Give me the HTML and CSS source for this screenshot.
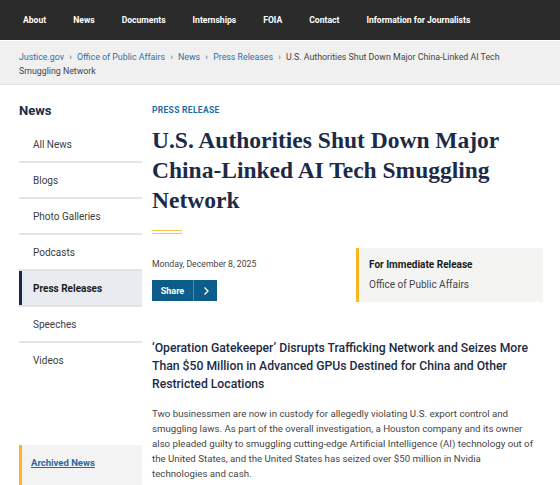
FILE: index.html
```html
<!DOCTYPE html>
<html lang="en">

<head>
    <meta charset="UTF-8">
    <meta name="viewport" content="width=device-width, initial-scale=1.0">
    <title>U.S. Authorities Shut Down Major China-Linked AI Tech Smuggling Network</title>
    <link rel="stylesheet" href="styles.css">
</head>

<body>
    <nav class="top-nav">
        <a href="#">About</a>
        <a href="#">News</a>
        <a href="#">Documents</a>
        <a href="#">Internships</a>
        <a href="#">FOIA</a>
        <a href="#">Contact</a>
        <a href="#">Information for Journalists</a>
    </nav>

    <div class="breadcrumb">
        <a href="#">Justice.gov</a> <span class="sep">&rsaquo;</span>
        <a href="#">Office of Public Affairs</a> <span class="sep">&rsaquo;</span>
        <a href="#">News</a> <span class="sep">&rsaquo;</span>
        <a href="#">Press Releases</a> <span class="sep">&rsaquo;</span>
        <span class="current">U.S. Authorities Shut Down Major China-Linked AI Tech Smuggling Network</span>
    </div>

    <div class="page">
        <aside class="sidebar">
            <h2 class="side-title">News</h2>
            <ul class="side-menu">
                <li><a href="#">All News</a></li>
                <li><a href="#">Blogs</a></li>
                <li><a href="#">Photo Galleries</a></li>
                <li><a href="#">Podcasts</a></li>
                <li class="active"><a href="#">Press Releases</a></li>
                <li><a href="#">Speeches</a></li>
                <li><a href="#">Videos</a></li>
            </ul>
            <div class="archived">
                <a href="#">Archived News</a>
            </div>
        </aside>

        <main class="article">
            <div class="kicker">Press Release</div>
            <h1 class="title">U.S. Authorities Shut Down Major China-Linked AI Tech Smuggling Network</h1>
            <div class="rule"></div>

            <div class="meta-row">
                <div class="meta-left">
                    <div class="date">Monday, December 8, 2025</div>
                    <div class="share">
                        <span class="share-label">Share</span>
                        <span class="share-arrow">
                            <svg width="8" height="10" viewBox="0 0 8 10">
                                <path d="M2.5 1.5 L6 5 L2.5 8.5" fill="none" stroke="#fff" stroke-width="1.3" />
                            </svg>
                        </span>
                    </div>
                </div>
                <div class="release-box">
                    <div class="release-title">For Immediate Release</div>
                    <div class="release-office">Office of Public Affairs</div>
                </div>
            </div>

            <h2 class="subtitle">‘Operation Gatekeeper’ Disrupts Trafficking Network and Seizes More Than $50 Million in Advanced GPUs Destined for China and Other Restricted Locations</h2>

            <p class="body-text">Two businessmen are now in custody for allegedly violating U.S. export control and smuggling laws. As part of the overall investigation, a Houston company and its owner also pleaded guilty to smuggling cutting-edge Artificial Intelligence (AI) technology out of the United States, and the United States has seized over $50 million in Nvidia technologies and cash.</p>
        </main>
    </div>
</body>

</html>
```

FILE: styles.css
```css
* {
    margin: 0;
    padding: 0;
    box-sizing: border-box;
}

body {
    font-family: "Roboto", "Liberation Sans", Arial, sans-serif;
    color: #1b1b1b;
    background: white;
    width: 560px;
    overflow: hidden;
}

a {
    text-decoration: none;
}

/* top navigation */
.top-nav {
    height: 41px;
    background-color: #2b2b2b;
    border-bottom: 1px solid #ffffff;
    display: flex;
    align-items: center;
    gap: 27px;
    padding-left: 23px;
}

.top-nav a {
    color: #ffffff;
    font-size: 8.6px;
    font-weight: 700;
    white-space: nowrap;
}

/* breadcrumb */
.breadcrumb {
    background-color: #f0f0f0;
    border-bottom: 1px solid #e4e4e4;
    padding: 9px 19px 6px;
    font-size: 8.8px;
    line-height: 14px;
    color: #454545;
}

.breadcrumb a {
    color: #2672a8;
}

.breadcrumb .sep {
    color: #6b6b6b;
    margin: 0 3px;
}

/* page layout */
.page {
    display: flex;
    gap: 10px;
    padding: 0 17px 0 19px;
}

.sidebar {
    width: 123px;
    flex-shrink: 0;
    padding-top: 18px;
}

.side-title {
    font-size: 13px;
    font-weight: 700;
    color: #1b2b44;
    line-height: 16px;
    margin-bottom: 8px;
}

.side-menu {
    list-style: none;
}

.side-menu li {
    border-bottom: 2px solid #e2e4e6;
}

.side-menu li:last-child {
    border-bottom: none;
}

.side-menu a {
    display: flex;
    align-items: center;
    height: 34px;
    padding-left: 14px;
    font-size: 10px;
    color: #3d3d3d;
}

.side-menu li.active {
    background-color: #e8ecf1;
    box-shadow: inset 3px 0 0 #15294a;
}

.side-menu li.active a {
    font-weight: 700;
    color: #1b1b1b;
}

.archived {
    margin-top: 68px;
    height: 40px;
    background-color: #f3f3f3;
    border-left: 3px solid #fbb520;
    padding: 6px 0 0 9px;
}

.archived a {
    font-size: 9.5px;
    font-weight: 700;
    line-height: 14px;
    color: #1f6aa3;
    text-decoration: underline;
}

/* article */
.article {
    flex: 1;
    padding-top: 20px;
}

.kicker {
    font-size: 8.5px;
    font-weight: 700;
    color: #1f6ea5;
    text-transform: uppercase;
    letter-spacing: 0.3px;
    line-height: 10px;
}

.title {
    font-family: "Liberation Serif", "DejaVu Serif", serif;
    font-weight: 700;
    font-size: 23.5px;
    line-height: 30px;
    color: #1b2b47;
    margin-top: 10px;
}

.rule {
    width: 30px;
    height: 4px;
    border-top: 1px solid #f7c54e;
    border-bottom: 1px solid #f7c54e;
    margin-top: 15px;
}

.meta-row {
    display: flex;
    justify-content: space-between;
    margin-top: 14px;
}

.meta-left {
    padding-top: 10px;
}

.date {
    font-size: 8.7px;
    color: #454545;
    line-height: 12px;
}

.share {
    display: flex;
    margin-top: 10px;
    height: 21px;
    width: 65px;
    background-color: #0d5d8c;
    color: white;
}

.share-label {
    width: 42px;
    display: flex;
    align-items: center;
    justify-content: center;
    font-size: 9px;
    font-weight: 700;
    border-right: 1px solid #4d87ab;
}

.share-arrow {
    flex: 1;
    display: flex;
    align-items: center;
    justify-content: center;
}

.release-box {
    width: 187px;
    height: 54px;
    background-color: #f4f4f3;
    border-left: 3px solid #fbb520;
    padding: 10px 10px 0 10px;
}

.release-title {
    font-size: 10px;
    font-weight: 700;
    color: #1b1b1b;
    line-height: 14px;
}

.release-office {
    font-size: 10px;
    color: #454545;
    line-height: 14px;
    margin-top: 6px;
}

.subtitle {
    font-size: 12.2px;
    font-weight: 500;
    line-height: 18px;
    color: #1b2b44;
    margin-top: 37px;
}

.body-text {
    font-size: 9.7px;
    line-height: 15px;
    color: #454545;
    margin-top: 13px;
    padding-right: 5px;
}
```
